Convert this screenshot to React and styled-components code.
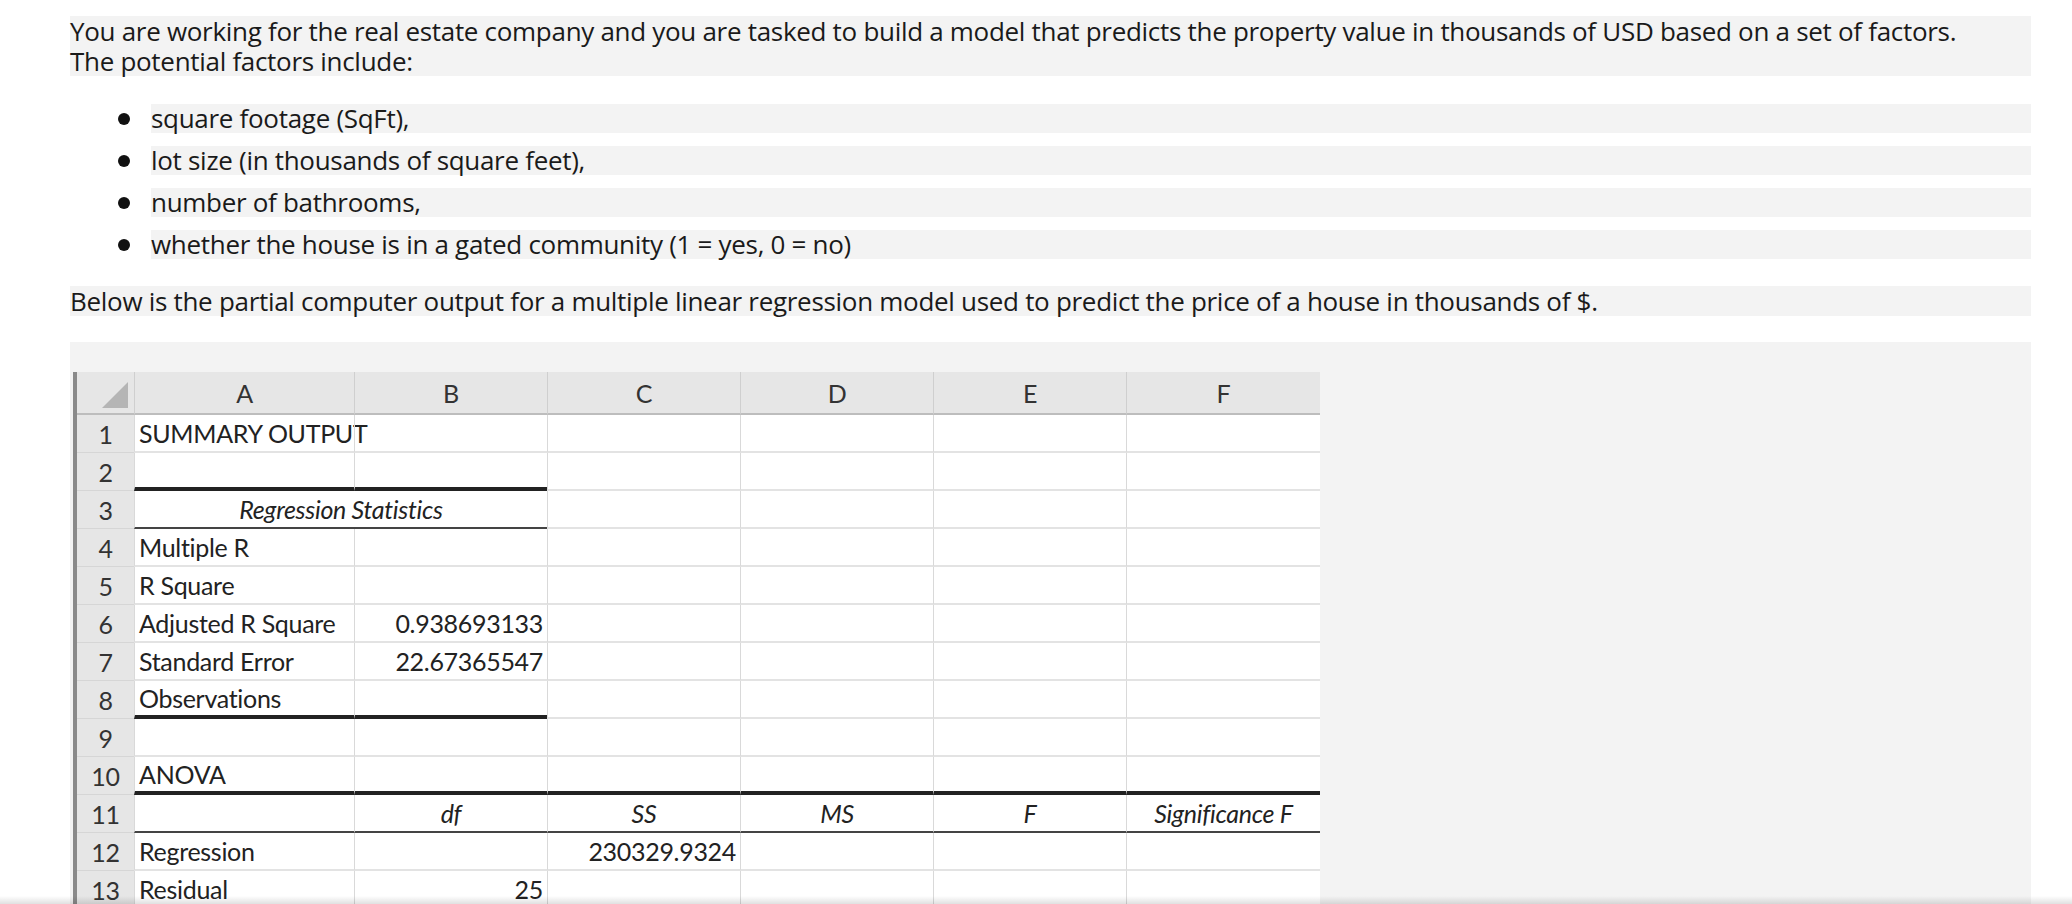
import styled, { createGlobalStyle } from 'styled-components';

const Global = createGlobalStyle`
  html, body { margin: 0; background: #fff; }
  body { font-family: "Open Sans", "Noto Sans", sans-serif; color: #1a1a1a; }
`;

const Page = styled.div`
  height: 904px;
  overflow: hidden;
  position: relative;
  padding: 16px 41px 0 70px;
  box-sizing: border-box;
  &::after {
    content: '';
    position: absolute;
    left: 0; right: 0; bottom: 0;
    height: 8px;
    background: linear-gradient(to bottom, rgba(0,0,0,0), rgba(0,0,0,0.12));
  }
`;

const Band = styled.p`
  margin: 0;
  background: #f3f3f3;
  font-size: 26px;
  line-height: 30px;
  letter-spacing: -0.3px;
  white-space: nowrap;
`;

const List = styled.ul`
  margin: 28px 0 0;
  padding: 0 0 0 81px;
  list-style: none;
  display: flex;
  flex-direction: column;
  gap: 13px;
`;

const Item = styled.li`
  position: relative;
  background: #f3f3f3;
  font-size: 26px;
  line-height: 29px;
  letter-spacing: -0.3px;
  &::before {
    content: '';
    position: absolute;
    left: -33px;
    top: 9px;
    width: 12px;
    height: 12px;
    border-radius: 50%;
    background: #111;
  }
`;

const Below = styled(Band)`
  margin-top: 27px;
`;

const SheetArea = styled.div`
  margin-top: 26px;
  background: #f3f3f3;
  padding: 30px 0 0 3px;
  height: 600px;
`;

const Grid = styled.div`
  display: grid;
  grid-template-columns: 57px 220px 193px 193px 193px 193px 194px;
  grid-auto-rows: 38px;
  grid-template-rows: 43px;
  width: 1243px;
  background: #fff;
  border-left: 4px solid #8a8a8a;
  font-family: Lato, "Open Sans", sans-serif;
  font-size: 25px;
  letter-spacing: -0.3px;
  color: #222;
`;

const Corner = styled.div`
  background: #e6e6e6;
  border-bottom: 2px solid #bdbdbd;
  position: relative;
  &::after {
    content: '';
    position: absolute;
    right: 6px; bottom: 5px;
    border-left: 26px solid transparent;
    border-bottom: 26px solid #b5b5b5;
  }
`;

const ColHead = styled.div`
  background: #e6e6e6;
  border-left: 1px solid #cfcfcf;
  border-bottom: 2px solid #bdbdbd;
  display: flex;
  align-items: center;
  justify-content: center;
  color: #333;
`;

const RowHead = styled.div`
  background: #e6e6e6;
  border-bottom: 1px solid #d6d6d6;
  display: flex;
  align-items: center;
  justify-content: center;
  color: #333;
`;

const Cell = styled.div`
  border-left: 1px solid #d9d9d9;
  border-bottom: ${(p) => p.$rule === 'thick' ? '4px solid #222' : p.$rule === 'thin' ? '2px solid #444' : '2px solid #e3e3e3'};
  display: flex;
  align-items: center;
  justify-content: ${(p) => p.$align || 'flex-start'};
  padding: 0 4px;
  font-style: ${(p) => (p.$italic ? 'italic' : 'normal')};
  white-space: nowrap;
  box-sizing: border-box;
`;

const Span2 = styled(Cell)`
  grid-column: span 2;
`;

const rows = [
  [['SUMMARY OUTPUT']],
  [['', { rule: 'thick' }], ['', { rule: 'thick' }]],
  null,
  [['Multiple R']],
  [['R Square']],
  [['Adjusted R Square'], ['0.938693133', { align: 'flex-end' }]],
  [['Standard Error'], ['22.67365547', { align: 'flex-end' }]],
  [['Observations', { rule: 'thick' }], ['', { rule: 'thick' }]],
  [],
  [['ANOVA', { rule: 'thick' }], ['', { rule: 'thick' }], ['', { rule: 'thick' }], ['', { rule: 'thick' }], ['', { rule: 'thick' }], ['', { rule: 'thick' }]],
  [['', { rule: 'thin' }], ['df', { rule: 'thin', italic: true, align: 'center' }], ['SS', { rule: 'thin', italic: true, align: 'center' }], ['MS', { rule: 'thin', italic: true, align: 'center' }], ['F', { rule: 'thin', italic: true, align: 'center' }], ['Significance F', { rule: 'thin', italic: true, align: 'center' }]],
  [['Regression'], [''], ['230329.9324', { align: 'flex-end' }]],
  [['Residual'], ['25', { align: 'flex-end' }]],
];

export default function App() {
  return (
    <>
      <Global />
      <Page>
        <Band>
          You are working for the real estate company and you are tasked to build a model that predicts the property value in thousands of USD based on a set of factors.
          <br />
          The potential factors include:
        </Band>
        <List>
          <Item>square footage (SqFt),</Item>
          <Item>lot size (in thousands of square feet),</Item>
          <Item>number of bathrooms,</Item>
          <Item>whether the house is in a gated community (1 = yes, 0 = no)</Item>
        </List>
        <Below>Below is the partial computer output for a multiple linear regression model used to predict the price of a house in thousands of $.</Below>
        <SheetArea>
          <Grid>
            <Corner />
            {['A', 'B', 'C', 'D', 'E', 'F'].map((c) => <ColHead key={c}>{c}</ColHead>)}
            {rows.map((r, i) => {
              const n = i + 1;
              if (r === null) {
                return [
                  <RowHead key={'h' + n}>{n}</RowHead>,
                  <Span2 key="rs" $rule="thin" $italic $align="center">Regression Statistics</Span2>,
                  ...[0, 1, 2, 3].map((k) => <Cell key={'e' + k} />),
                ];
              }
              const cells = [];
              for (let k = 0; k < 6; k++) {
                const [t, o = {}] = r[k] || [''];
                cells.push(<Cell key={n + '-' + k} $rule={o.rule} $italic={o.italic} $align={o.align}>{t}</Cell>);
              }
              return [<RowHead key={'h' + n}>{n}</RowHead>, ...cells];
            })}
          </Grid>
        </SheetArea>
      </Page>
    </>
  );
}
